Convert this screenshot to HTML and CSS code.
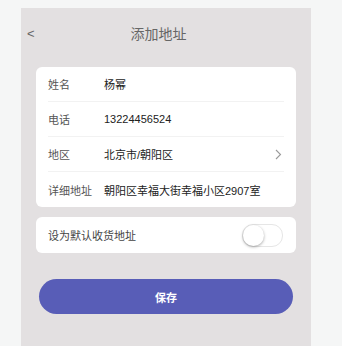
FILE: index.html
```html
<!DOCTYPE html>
<html lang="zh">
<head>
<meta charset="utf-8">
<link rel="stylesheet" href="styles.css">
</head>
<body>
<div class="page">
  <div class="header">
    <span class="back">&lt;</span>
    <span class="title">添加地址</span>
  </div>
  <div class="card">
    <div class="row"><span class="label">姓名</span><span class="value">杨幂</span></div>
    <div class="row"><span class="label">电话</span><span class="value">13224456524</span></div>
    <div class="row"><span class="label">地区</span><span class="value">北京市/朝阳区</span>
      <svg class="chev" width="7" height="11" viewBox="0 0 7 11"><path d="M1 1 L5.5 5.5 L1 10" fill="none" stroke="#9a9a9a" stroke-width="1.1"/></svg>
    </div>
    <div class="row"><span class="label">详细地址</span><span class="value">朝阳区幸福大街幸福小区2907室</span></div>
  </div>
  <div class="card card-switch">
    <span class="label-wide">设为默认收货地址</span>
    <span class="switch"><span class="knob"></span></span>
  </div>
  <button class="save">保存</button>
</div>
</body>
</html>
```
FILE: styles.css
```css
html, body {
  margin: 0;
  padding: 0;
  background: #f5f6f6;
}
body {
  padding: 8px 0 0 21px;
  font-family: "Liberation Sans", "Noto Sans CJK SC", sans-serif;
  height: 338px;
  overflow: hidden;
}
.page {
  width: 290px;
  height: 338px;
  background: #e3e0e1;
  padding: 0 15px 0 15px;
  box-sizing: border-box;
}
.header {
  height: 50px;
  display: flex;
  align-items: center;
  justify-content: center;
  position: relative;
  margin: 0 -15px;
}
.back {
  position: absolute;
  left: 6px;
  top: 18px;
  font-size: 13px;
  color: #666;
}
.title {
  font-size: 14px;
  color: #666;
  margin-left: -15px;
}
.card {
  margin-top: 9px;
  background: #fff;
  border-radius: 6px;
  padding: 0 12px;
}
.row {
  height: 35px;
  display: flex;
  align-items: center;
  border-bottom: 1px solid #f2f2f2;
  box-sizing: border-box;
  font-size: 11px;
}
.row:last-child {
  border-bottom: none;
}
.label {
  width: 56px;
  color: #555;
}
.value {
  flex: 1;
  color: #222;
}
.chev {
  margin-right: 2px;
}
.card-switch {
  margin-top: 10px;
  height: 36px;
  display: flex;
  align-items: center;
  justify-content: space-between;
  font-size: 11px;
  color: #444;
}
.switch {
  width: 39px;
  height: 21px;
  border: 1px solid #e6e6e6;
  border-radius: 11px;
  position: relative;
  margin-right: 1px;
  margin-top: 1px;
}
.knob {
  position: absolute;
  left: 0;
  top: 0;
  width: 21px;
  height: 21px;
  border-radius: 50%;
  background: #fff;
  box-shadow: 0 1px 3px rgba(0,0,0,0.35);
}
.save {
  display: block;
  margin: 26px 3px 0;
  width: calc(100% - 6px);
  height: 35px;
  border: none;
  border-radius: 18px;
  background: #585db7;
  color: #fff;
  font-family: "Liberation Sans", "Noto Sans CJK SC", sans-serif;
  font-size: 11px;
  font-weight: bold;
}
```
